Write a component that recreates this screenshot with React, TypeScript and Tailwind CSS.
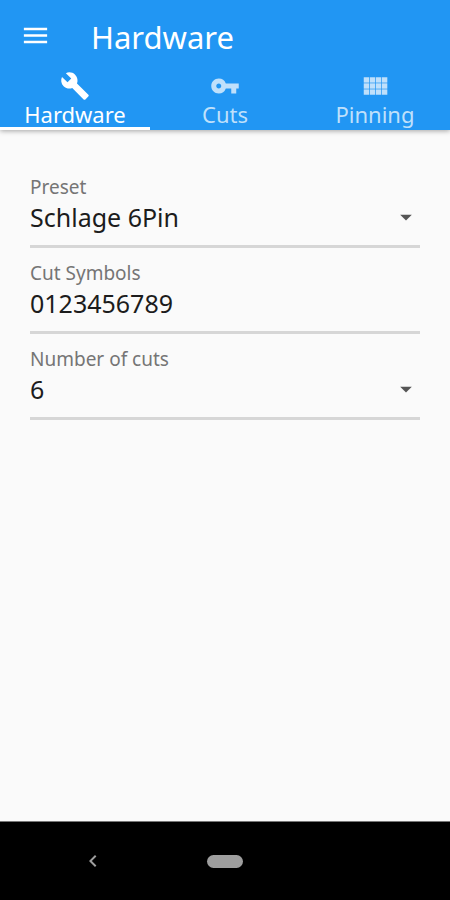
import { useState } from "react";
import type { ReactNode } from "react";
import {
  MdArrowDropDown,
  MdBuild,
  MdChevronLeft,
  MdMenu,
  MdVpnKey,
} from "react-icons/md";

const PRESETS = ["Schlage 6Pin", "Schlage 5Pin", "Kwikset 5Pin"];
const CUT_COUNTS = ["4", "5", "6", "7"];

function GridIcon() {
  const cells: ReactNode[] = [];
  for (let row = 0; row < 3; row += 1) {
    for (let col = 0; col < 4; col += 1) {
      cells.push(
        <rect
          key={`${row}-${col}`}
          x={3 + col * 4.85}
          y={5 + row * 4.85}
          width="4.3"
          height="4.3"
        />,
      );
    }
  }
  return (
    <svg viewBox="0 0 24 24" className="size-[30px]" fill="currentColor" aria-hidden="true">
      {cells}
    </svg>
  );
}

const TABS: { name: string; icon: ReactNode }[] = [
  { name: "Hardware", icon: <MdBuild className="size-[30px]" /> },
  { name: "Cuts", icon: <MdVpnKey className="size-[30px]" /> },
  { name: "Pinning", icon: <GridIcon /> },
];

function Field({ id, label, children }: { id: string; label: string; children: ReactNode }) {
  return (
    <div className="flex flex-col border-b-[3px] border-[#d6d6d6] pb-[10px]">
      <label htmlFor={id} className="text-[19px] leading-6 text-[#757575]">
        {label}
      </label>
      {children}
    </div>
  );
}

function SelectField({
  id,
  label,
  initial,
  options,
}: {
  id: string;
  label: string;
  initial: string;
  options: string[];
}) {
  const [value, setValue] = useState(initial);
  return (
    <Field id={id} label={label}>
      <div className="relative">
        <select
          id={id}
          value={value}
          onChange={(e) => setValue(e.target.value)}
          className="block h-9 w-full appearance-none bg-transparent text-[25px] leading-9 text-[#1c1c1c] outline-none"
        >
          {options.map((option) => (
            <option key={option}>{option}</option>
          ))}
        </select>
        <MdArrowDropDown className="pointer-events-none absolute top-1 right-0 size-[28px] text-[#555555]" />
      </div>
    </Field>
  );
}

export default function App() {
  const [active, setActive] = useState("Hardware");
  const [symbols, setSymbols] = useState("0123456789");

  return (
    <div className="flex min-h-screen flex-col bg-[#fafafa] font-['Noto_Sans','Open_Sans',sans-serif]">
      <header className="bg-[#2196f3] text-white shadow-[0_1px_5px_rgba(0,0,0,0.35)]">
        <div className="flex h-[71px] items-center gap-10 px-5">
          <button type="button" aria-label="Open menu">
            <MdMenu className="size-[31px]" />
          </button>
          <h1 className="pt-[2px] text-[31px] leading-10">Hardware</h1>
        </div>
        <nav className="grid grid-cols-3">
          {TABS.map((tab) => (
            <button
              key={tab.name}
              type="button"
              aria-pressed={active === tab.name}
              onClick={() => setActive(tab.name)}
              className={
                active === tab.name
                  ? "flex flex-col items-center border-b-[3px] border-white text-white"
                  : "flex flex-col items-center border-b-[3px] border-transparent text-[#bfe0fb]"
              }
            >
              {tab.icon}
              <span className="text-[22px] leading-[26px]">{tab.name}</span>
            </button>
          ))}
        </nav>
      </header>

      <main className="flex grow flex-col gap-[13px] px-[30px] pt-[45px]">
        <SelectField id="preset" label="Preset" initial="Schlage 6Pin" options={PRESETS} />
        <Field id="symbols" label="Cut Symbols">
          <input
            id="symbols"
            type="text"
            value={symbols}
            onChange={(e) => setSymbols(e.target.value)}
            className="block h-9 w-full bg-transparent text-[25px] leading-9 text-[#1c1c1c] outline-none"
          />
        </Field>
        <SelectField id="count" label="Number of cuts" initial="6" options={CUT_COUNTS} />
      </main>

      <footer className="grid h-[79px] grid-cols-[186px_1fr_186px] items-center border-t border-[#777777] bg-black text-[#9e9e9e]">
        <button type="button" aria-label="Back" className="justify-self-center">
          <MdChevronLeft className="size-6" />
        </button>
        <button
          type="button"
          aria-label="Home"
          className="h-[13px] w-9 justify-self-center rounded-full bg-[#9e9e9e]"
        />
      </footer>
    </div>
  );
}
